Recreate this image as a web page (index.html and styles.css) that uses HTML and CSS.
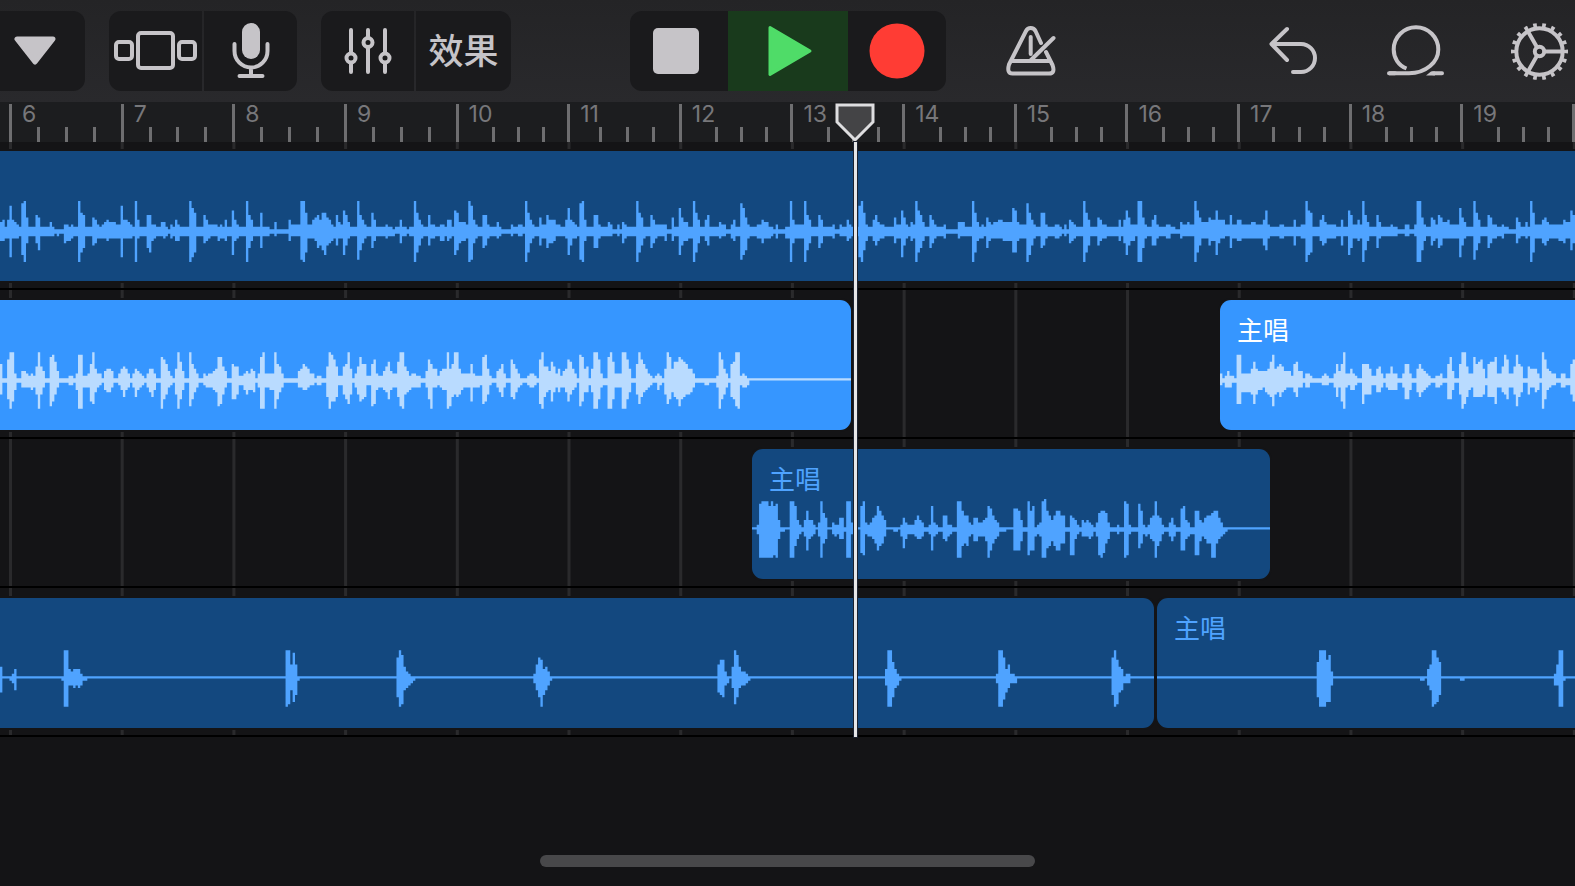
FILE: index.html
```html
<!DOCTYPE html>
<html lang="zh-CN">
<head>
<meta charset="utf-8">
<meta name="viewport" content="width=device-width, initial-scale=1">
<title>主唱</title>
<link rel="stylesheet" href="styles.css">
</head>
<body class="app">
<header class="toolbar">
  <div class="toolbar-left">
    <div class="group group-edge">
      <button class="tool tool-menu" type="button" aria-label="Menu">
        <svg width="42" height="30" viewBox="0 0 42 30"><path class="solid rounded" d="M3 3H39L21 26Z"/></svg>
      </button>
    </div>
    <div class="group">
      <button class="tool" type="button" aria-label="Browser">
        <svg class="line" width="84" height="40" viewBox="0 0 84 40"><rect x="2" y="11" width="16" height="17" rx="3"/><rect x="24" y="2" width="35" height="35" rx="3"/><rect x="65" y="11" width="16" height="17" rx="3"/></svg>
      </button>
      <button class="tool" type="button" aria-label="Microphone">
        <svg class="line" width="38" height="56" viewBox="0 0 38 56"><rect class="solid" x="10" y="0" width="18" height="36" rx="9"/><path d="M2.500 21V28A16.500 16.500 0 0 0 35.500 28V21M19 45V53M7.500 53H30.500"/></svg>
      </button>
    </div>
    <div class="group">
      <button class="tool" type="button" aria-label="Mixer">
        <svg class="line" width="48" height="46" viewBox="0 0 48 46"><path d="M7 2V25M7 35V44M24 2V9M24 19V44M41 2V25M41 35V44"/><circle cx="7" cy="30" r="4.500"/><circle cx="24" cy="14.500" r="4.500"/><circle cx="41" cy="30" r="4.500"/></svg>
      </button>
      <button class="tool tool-text" type="button">效果</button>
    </div>
  </div>
  <div class="group transport">
    <button class="tool tool-stop" type="button" aria-label="Stop">
      <svg width="46" height="46" viewBox="0 0 46 46"><rect class="solid" width="46" height="46" rx="5"/></svg>
    </button>
    <button class="tool tool-play" type="button" aria-label="Play">
      <svg width="46" height="52" viewBox="0 0 46 52"><path class="play" d="M3 2.500L43 26L3 49.500Z"/></svg>
    </button>
    <button class="tool" type="button" aria-label="Record">
      <svg width="56" height="56" viewBox="0 0 56 56"><circle class="record" cx="28" cy="28" r="27.500"/></svg>
    </button>
  </div>
  <div class="toolbar-right">
    <button class="plain" type="button" aria-label="Metronome">
      <svg class="line" width="50" height="50" viewBox="0 0 50 50"><path d="M35 17L29.500 5Q28 2 24.700 2Q21.500 2 20 5L3 38.500Q0.500 47.500 6.500 47.500H43Q49.500 47.500 46.500 39L40 26M6 35H44M24.700 11V28M25 34L47.500 12"/></svg>
    </button>
    <div class="edit-tools">
      <button class="plain" type="button" aria-label="Undo">
        <svg class="line" width="50" height="50" viewBox="0 0 50 50"><path d="M18 3L2.500 18L18 34M3 18H32A14 14 0 0 1 32 46H24"/></svg>
      </button>
      <button class="plain" type="button" aria-label="Loop browser">
        <svg class="line" width="60" height="52" viewBox="0 0 60 52"><path class="butt" d="M21.500 43.500C13.500 40.500 8.700 33 8.700 24.500A22.300 22.300 0 0 1 53.300 24.500C53.300 37 41 48.300 24 48.300H4"/><path d="M4 48.300H10M48 48.300H57"/><path class="solid bare" d="M41 50.500L46 46.500H50V50.500Z"/></svg>
      </button>
      <button class="plain" type="button" aria-label="Settings">
        <svg class="line" width="57" height="57" viewBox="0 0 57 57"><circle cx="28.500" cy="28.500" r="23.200"/><circle class="teeth" cx="28.500" cy="28.500" r="26.500" pathLength="180"/><circle cx="28.500" cy="28.500" r="4.700"/><path d="M33.500 28.500H51.500M26 24.200L17 8.600M26 32.800L17 48.400"/></svg>
      </button>
    </div>
  </div>
</header>

<main class="timeline">
  <div class="ruler" id="ruler"></div>
  <div class="tracks">
    <section class="track">
      <div class="clip open-left open-right" style="flex-grow:1575"><span class="clip-name"></span><svg class="wave" data-wave="drums" data-cols="666"></svg></div>
    </section>
    <section class="track">
      <div class="clip selected open-left" style="flex-grow:851"><span class="clip-name"></span><svg class="wave" data-wave="leadA" data-cols="360"></svg></div>
      <div class="space" style="flex-grow:369"></div>
      <div class="clip selected open-right" style="flex-grow:355"><span class="clip-name">主唱</span><svg class="wave" data-wave="leadB" data-cols="150"></svg></div>
    </section>
    <section class="track">
      <div class="space" style="flex-grow:752"></div>
      <div class="clip" style="flex-grow:518"><span class="clip-name">主唱</span><svg class="wave" data-wave="double" data-cols="220"></svg></div>
      <div class="space" style="flex-grow:305"></div>
    </section>
    <section class="track">
      <div class="clip open-left" style="flex-grow:1154"><span class="clip-name"></span><svg class="wave" data-wave="adlibA" data-cols="489"></svg></div>
      <div class="space" style="flex-grow:3"></div>
      <div class="clip open-right" style="flex-grow:418"><span class="clip-name">主唱</span><svg class="wave" data-wave="adlibB" data-cols="178"></svg></div>
    </section>
  </div>
  <div class="playhead">
    <svg class="playhead-grip" width="42" height="40" viewBox="0 0 42 40"><path d="M3 3H39V20L21 38L3 20Z"/></svg>
    <div class="playhead-line"></div>
  </div>
</main>
<div class="home-bar"></div>
<script src="timeline.js"></script>
</body>
</html>
```

FILE: styles.css
```css
* {
  box-sizing: border-box;
}

.app {
  margin: 0;
  min-height: 100vh;
  display: flex;
  flex-direction: column;
  overflow-x: hidden;
  background: #141416;
  font-family: Inter, "Noto Sans CJK SC", sans-serif;
}

svg {
  display: block;
}

button {
  margin: 0;
  padding: 0;
  border: 0;
  background: none;
  color: #c6c4c8;
  font-family: inherit;
}

/* Toolbar */

.toolbar {
  display: grid;
  grid-template-columns: 1fr auto 1fr;
  align-items: center;
  height: 102px;
  background: linear-gradient(#242426, #29292c);
}

.toolbar-left {
  display: flex;
  gap: 24px;
}

.group {
  display: flex;
  gap: 2px;
  height: 80px;
  border-radius: 12px;
  overflow: hidden;
}

.group-edge {
  border-radius: 0 12px 12px 0;
}

.tool {
  display: flex;
  align-items: center;
  justify-content: center;
  width: 93px;
  background: #1a1a1c;
}

.tool-menu {
  width: 85px;
  padding-right: 15px;
}

.tool-text {
  width: 95px;
  font-size: 35px;
  font-weight: 500;
  line-height: 40px;
}

.transport {
  gap: 0;
}

.transport .tool {
  width: 98px;
}

.transport .tool-stop {
  padding-right: 6px;
}

.transport .tool-play {
  width: 120px;
  padding-left: 4px;
  background: #193a1c;
}

.toolbar-right {
  display: flex;
  justify-content: space-between;
  padding: 0 7px 0 60px;
}

.edit-tools {
  display: flex;
  align-items: center;
  gap: 66px;
}

.line {
  fill: none;
  stroke: #c6c4c8;
  stroke-width: 4;
  stroke-linecap: round;
  stroke-linejoin: round;
}

.solid {
  fill: #c6c4c8;
}

.line .solid,
.bare {
  stroke: none;
}

.rounded {
  stroke: #c6c4c8;
  stroke-width: 5;
  stroke-linejoin: round;
}

.butt {
  stroke-linecap: butt;
}

.teeth {
  stroke-linecap: butt;
  stroke-dasharray: 4 6;
  stroke-dashoffset: 2;
}

.play {
  fill: #4fdc68;
  stroke: #4fdc68;
  stroke-width: 3;
  stroke-linejoin: round;
}

.record {
  fill: #ff3c34;
}

/* Ruler */

.timeline {
  position: relative;
}

.ruler {
  display: flex;
  height: 40px;
  padding: 2px 0 0 9px;
  background: #1c1d1f;
}

.bar {
  flex: 1 1 0;
  display: grid;
  grid-template-columns: repeat(4, 1fr);
  align-items: end;
}

.beat {
  height: 15px;
  border-left: 3px solid #6e6e70;
}

.beat-first,
.bar-end {
  height: 38px;
  border-left: 3px solid #6e6e70;
}

.bar-end {
  width: 2px;
}

.bar-number {
  display: block;
  padding-left: 10px;
  color: #77777a;
  font-size: 23px;
  line-height: 21px;
}

/* Tracks */

.tracks {
  background: linear-gradient(90deg, #2a2a2c 3px, transparent 3px) 9px 0 / calc((100% - 11px) / 14) 100% repeat-x;
}

.track {
  display: flex;
  padding: 10px 0 7px;
  border-bottom: 2px solid #000;
}

.track:first-child {
  padding-top: 9px;
}

.clip,
.space {
  flex-basis: 0;
  min-width: 0;
}

.clip {
  height: 130px;
  overflow: hidden;
  border-radius: 11px;
  background: #13487f;
  color: #4fa3ff;
  box-shadow: 0 0 0 2px #141416;
}

.clip.selected {
  background: #3696ff;
  color: #b9dbff;
}

.open-left {
  border-top-left-radius: 0;
  border-bottom-left-radius: 0;
}

.open-right {
  border-top-right-radius: 0;
  border-bottom-right-radius: 0;
}

.clip-name {
  display: block;
  height: 50px;
  padding: 17px 0 0 17px;
  font-size: 26px;
  line-height: 28px;
  white-space: nowrap;
}

.selected .clip-name {
  color: #fff;
}

.wave {
  width: 100%;
  height: 61px;
  fill: currentColor;
}

/* Playhead */

.playhead {
  position: absolute;
  top: 0;
  bottom: 0;
  left: 54.3%;
  width: 0;
  display: flex;
  flex-direction: column;
  align-items: center;
}

.playhead-grip {
  flex: none;
  fill: #444446;
  stroke: #dedee0;
  stroke-width: 3;
}

.playhead-line {
  flex: 1;
  width: 3px;
  background: #e6e6e8;
  box-shadow: 0 0 0 1px #1c2230;
}

.home-bar {
  width: 31.4%;
  height: 12px;
  margin: auto auto 19px;
  border-radius: 6px;
  background: #48484a;
}
```

FILE: timeline.js
```js
// Each run is "column,up,down": the level holds until the next run's column.
const waves = {
  drums: `0,4,4 1,5,4 2,2,3 3,5,3 4,11,11 5,5,3 6,4,3 7,3,3 8,2,2 9,12,10 10,13,13 11,6,5 12,2,2 15,7,5 16,6,8 17,2,2 21,4,2 22,2,2 23,1,1 24,1,2 25,1,1 27,3,5 28,3,4 29,2,4 30,3,3 31,2,2 33,13,13 34,8,9 35,7,7 36,2,2 39,6,6 40,5,5 41,3,3 42,2,3 43,3,3 44,4,3 45,5,4 46,4,3 49,3,3 51,11,11 52,5,3 54,4,3 55,3,3 56,2,2 57,13,13 58,5,3 59,2,2 62,7,7 63,7,9 64,3,4 65,3,3 66,2,2 68,4,2 69,4,3 70,2,2 71,1,1 72,3,3 73,2,2 74,5,4 75,3,4 76,2,2 80,13,13 81,10,11 82,8,9 83,2,2 86,7,5 87,5,4 88,3,3 89,3,2 92,2,4 93,3,3 94,2,3 95,5,4 96,2,2 98,9,10 99,5,4 100,3,3 101,2,2 104,13,13 105,7,7 106,5,4 107,2,2 110,8,7 111,2,2 114,1,1 116,4,2 117,1,1 122,5,4 123,3,2 127,13,12 128,13,13 129,8,9 130,3,3 132,5,3 133,6,4 134,7,7 135,5,6 136,8,8 137,8,10 138,6,6 139,5,5 140,3,4 141,2,3 142,7,6 143,4,3 144,3,3 145,9,10 146,7,6 147,4,3 148,2,2 151,13,12 152,7,8 153,5,5 154,3,3 155,2,2 157,8,7 158,5,4 159,2,2 163,3,3 164,2,2 166,1,2 167,2,1 169,5,5 170,2,2 172,1,1 173,2,2 175,13,13 176,8,9 177,5,6 178,3,3 179,2,2 181,7,6 182,3,3 184,2,2 186,3,4 188,2,2 189,5,4 190,5,3 191,2,2 192,9,10 193,8,8 194,4,5 195,4,4 197,3,3 198,13,13 199,11,12 200,5,5 201,3,3 202,2,2 204,7,7 205,7,6 206,3,3 207,2,2 210,4,3 211,2,2 212,1,1 216,3,2 217,2,1 219,3,2 221,2,1
  222,13,13 223,8,9 224,5,5 225,3,3 226,2,2 228,6,6 229,3,3 231,7,7 232,5,5 234,5,4 235,3,2 237,2,2 239,5,3 240,10,10 241,5,6 242,4,3 243,3,3 244,2,2 245,12,12 246,13,13 247,5,4 248,2,2 251,7,7 253,3,3 254,2,2 257,4,2 258,3,2 259,1,1 261,3,2 262,1,1 263,4,5 264,3,3 265,2,2 269,13,13 270,8,9 271,6,6 272,2,3 273,2,2 275,7,7 276,5,5 277,3,3 278,3,2 281,3,4 282,1,1 284,6,4 285,2,2 287,10,10 288,6,6 289,4,4 291,2,3 293,13,13 294,8,9 295,5,5 296,2,2 298,5,4 299,7,6 300,2,2 304,4,3 305,3,2 307,1,1 309,3,3 310,5,4 311,2,2 313,12,12 314,10,10 315,6,8 316,3,3 317,2,2 320,3,3 322,5,5 323,4,3 325,2,3 326,2,2 327,1,1 328,3,3 329,1,1 332,2,3 334,13,13 335,5,5 336,3,3 340,13,13 341,7,8 342,5,5 343,2,2 346,7,7 347,5,5 348,2,2 352,3,3 353,1,1 355,3,2 356,2,2 358,5,4 359,3,3 360,2,2 363,11,11 364,13,13 365,8,8 366,3,4 367,2,2 369,5,4 370,7,6 371,4,4 372,3,3 374,2,2 378,6,5 379,3,3 381,9,11 382,6,6 383,3,3 384,2,2 385,4,4 386,3,3 387,13,13 388,9,9 389,7,7 390,4,4 391,2,2 393,7,7 394,5,5 395,3,3 396,2,2 399,3,3 400,1,1 405,4,3 406,4,2 408,2,2 411,13,13 412,8,9 413,4,4 414,2,3 415,3,3 416,2,2 417,6,7 418,4,4 419,3,3 420,4,3 422,5,3 424,4,4 428,10,9 429,9,9 430,4,4 431,3,3 434,12,13 435,8,10 436,5,6 437,3,3 438,2,2 440,8,7 441,8,6 442,3,3 443,2,2
  446,3,3 448,2,2 449,1,1 450,3,2 451,1,1 452,5,5 453,4,4 454,3,3 455,2,2 458,13,13 459,8,9 460,5,6 461,2,2 464,6,6 465,5,4 466,3,3 468,2,2 473,5,4 474,2,2 475,5,5 476,9,10 477,6,6 478,3,4 480,3,2 481,13,13 483,6,7 484,3,3 485,2,2 487,5,6 488,7,6 489,3,3 490,2,2 493,3,3 495,2,1 497,1,1 499,4,3 500,3,2 502,4,2 503,3,2 505,13,13 506,9,9 507,6,6 508,4,3 511,6,6 512,5,4 514,9,10 515,5,5 516,5,3 518,3,2 520,7,7 521,3,3 523,5,4 525,3,3 529,4,3 531,3,3 534,5,6 535,9,8 536,3,3 537,2,2 541,3,3 543,2,2 547,5,6 548,2,2 550,3,3 552,13,13 553,9,10 554,8,9 555,2,2 558,5,4 559,7,6 560,4,5 561,3,3 565,2,2 567,5,6 568,2,2 570,9,10 571,7,7 572,3,3 574,5,4 575,3,3 576,13,13 577,7,8 578,4,4 579,2,2 582,7,7 583,4,3 584,2,2 588,3,2 589,2,2 591,1,1 594,3,2 596,1,1 598,3,2 599,13,13 601,6,8 602,3,4 603,2,2 605,6,6 606,5,4 607,3,3 608,7,7 609,6,6 610,4,3 612,5,3 613,3,3 617,10,11 618,6,6 619,4,3 620,2,2 623,13,12 624,8,8 625,5,5 626,2,2 629,7,7 630,6,5 631,3,3 633,2,2 635,3,3 636,2,1 638,1,1 641,6,5 642,4,3 643,2,2 645,4,3 646,2,2 647,13,13 648,8,9 649,3,3 652,5,5 653,6,6 654,4,4 655,3,3 659,3,4 661,5,5 662,4,3 664,9,8 665,7,5`,
  leadA: `0,7,6 1,1,1 3,9,8 4,12,12 5,12,9 6,3,4 7,1,1 9,4,3 11,3,3 12,2,3 13,3,4 14,2,3 15,6,6 16,12,12 17,6,6 18,4,3 19,1,1 21,10,11 22,11,9 23,8,6 24,4,3 25,1,1 29,2,2 31,1,1 32,3,4 33,11,12 35,2,3 37,3,3 38,7,9 39,12,10 40,5,5 41,3,3 42,3,2 43,1,1 44,4,4 45,5,5 47,4,3 48,1,1 50,3,2 51,5,4 52,6,7 53,5,4 54,3,3 55,1,1 56,3,3 57,5,7 58,4,4 59,3,3 60,2,2 61,1,1 62,3,3 63,5,5 64,5,7 65,3,4 66,1,1 68,10,12 69,9,8 70,7,6 71,4,3 72,2,2 73,1,1 74,5,6 75,12,12 76,8,8 77,4,4 78,1,1 80,12,11 81,7,8 82,5,5 83,3,3 84,1,1 86,3,2 87,2,3 88,3,3 90,4,4 91,5,5 92,10,11 93,10,10 94,6,6 95,4,3 96,1,1 98,7,8 99,6,8 100,6,6 101,2,2 103,3,4 104,4,6 105,3,4 106,5,4 107,4,5 108,1,1 109,3,3 110,10,12 111,12,12 112,3,3 114,3,4 116,12,12 117,7,8 118,6,5 119,3,3 120,1,1 126,4,3 127,5,3 128,7,4 129,6,4 130,5,3 131,3,2 133,1,1 134,2,2 136,1,1 138,6,7 139,12,12 140,11,9 141,9,9 142,6,7 143,2,2 145,6,6 146,7,8 147,12,10 148,5,6 149,1,1 150,3,3 151,6,6 152,10,9 153,7,8 154,7,7 155,2,2 157,7,11 158,9,10 159,3,4 160,2,3 162,4,4 163,6,5 164,8,8 165,4,4 166,3,3 168,8,7 169,12,11 170,12,12 171,6,6 172,4,5 173,2,4 174,3,3 176,2,3 178,1,1 180,4,3 181,9,8 182,7,12 183,5,3 185,2,2 186,4,3 187,5,4 189,12,12 190,5,11 191,7,7 192,12,6 193,12,7 194,5,6 195,3,4 196,3,3 199,7,9 200,3,3 201,2,3 203,2,2 204,10,10 205,11,9 206,5,6 207,2,2 208,1,1 210,4,3 211,5,5 212,7,7 213,3,3 214,1,1 216,9,7 217,7,8 218,5,5 219,3,3 220,1,2 221,1,1
  223,2,2 224,3,3 226,2,2 227,1,1 228,9,10 229,12,12 230,6,7 231,6,5 232,4,4 233,8,9 234,6,5 235,3,3 236,5,5 237,2,3 238,4,3 239,5,5 240,9,9 241,8,6 242,5,4 243,3,3 244,1,1 245,11,11 246,10,9 247,5,5 248,6,5 249,1,2 250,5,5 251,12,12 253,9,8 254,3,3 255,1,2 257,10,12 258,12,12 259,8,8 260,3,3 263,12,12 265,9,8 266,5,5 267,1,1 269,7,6 270,12,10 271,9,7 272,7,5 273,5,4 274,3,3 275,2,2 276,1,1 277,2,1 278,3,4 279,2,2 280,1,1 281,5,6 282,12,10 283,10,8 284,5,5 285,8,7 286,8,8 287,10,11 288,9,8 289,8,7 290,7,6 291,5,6 292,5,5 293,3,3 294,1,1 298,1,2 300,1,1 303,2,3 304,12,12 305,9,8 306,5,6 307,3,3 308,1,1 309,7,7 310,8,8 311,12,11 312,12,12 313,2,2 314,3,3 315,2,3 316,1,2 317,1,0`,
  leadB: `0,3,2 1,1,1 2,2,3 3,4,3 4,2,3 5,2,1 6,1,1 7,11,10 9,3,5 13,5,6 14,8,10 15,5,6 16,4,4 18,4,3 19,4,5 20,5,6 21,8,7 22,11,11 23,5,6 24,6,5 25,7,7 26,6,5 27,4,4 28,4,3 30,2,3 31,7,5 32,8,7 33,4,3 35,1,1 36,3,3 38,2,1 39,1,1 43,2,2 44,3,2 45,2,2 46,1,1 48,3,3 49,7,7 50,4,3 51,7,9 52,12,12 53,3,3 54,3,2 55,5,4 56,3,4 57,2,2 58,1,1 60,7,10 61,7,6 63,5,6 64,2,2 66,5,5 67,6,5 68,3,3 69,1,1 70,3,3 71,3,4 72,6,4 73,3,4 75,1,1 77,3,3 78,7,8 80,3,4 81,1,1 83,5,5 84,7,7 85,5,5 86,4,4 87,3,3 88,2,2 89,1,1 91,2,3 93,3,2 94,1,1 96,7,8 97,10,8 98,4,4 99,1,1 101,7,6 102,12,12 103,12,10 104,6,7 105,3,4 106,3,3 107,10,7 108,7,7 109,8,7 110,9,7 111,5,6 112,1,2 113,7,7 114,8,7 116,10,10 117,3,3 119,6,5 120,11,6 121,9,8 122,3,3 124,6,6 125,11,11 126,7,7 127,6,5 128,1,1 130,6,6 131,5,3 133,5,5 134,3,4 135,1,1 136,12,12 137,9,8 138,5,4 139,4,3 140,3,2 142,1,1 144,3,3 146,1,2 148,7,6 149,9,9`,
  double: `0,1,0 2,2,2 3,11,12 4,12,12 7,10,12 8,12,12 9,10,11 10,11,12 11,4,4 12,1,1 14,1,0 16,12,12 18,10,7 19,4,4 20,2,2 21,1,1 22,4,3 23,8,9 24,4,4 25,4,3 26,2,2 27,1,0 28,3,3 29,12,12 30,7,6 31,5,4 32,1,0 34,3,2 35,2,3 36,2,2 37,5,4 39,1,1 40,12,12 42,3,2 43,1,0 46,10,10 47,12,11 48,3,2 49,2,3 50,3,3 51,5,4 52,6,6 53,10,9 54,8,7 55,6,6 56,4,3 57,1,0 60,1,1 62,1,0 63,2,3 64,5,8 65,3,4 66,2,2 69,4,3 70,6,4 71,4,4 72,3,3 73,1,1 75,2,2 76,10,9 77,3,3 78,2,2 79,1,1 81,6,4 82,6,5 83,2,3 84,2,2 85,1,1 87,12,12 89,8,7 90,6,6 91,6,7 92,3,3 93,2,2 94,5,5 96,3,3 98,4,3 99,5,5 100,10,12 101,9,9 102,6,6 103,4,4 104,3,3 105,1,1 108,1,0 111,9,9 113,8,9 114,4,5 115,1,1 117,12,11 118,8,9 119,10,9 120,1,3 121,2,2 122,3,3 123,12,12 124,13,12 125,8,8 126,6,7 127,4,5 128,6,7 129,8,9 131,6,6 133,1,1 135,6,11 136,5,11 137,4,4 138,2,2 139,1,1 140,4,3 141,3,3 142,4,3 143,3,4 144,2,3 145,1,1 146,3,3 147,7,11 148,8,12 149,8,10 150,7,6 151,3,4 152,1,1 155,2,2 156,1,1 158,12,12 159,11,11 160,2,2 161,1,1 164,11,8 165,8,6 166,2,2 167,1,3 168,2,2 169,5,4 170,6,5 171,12,12 172,6,7 173,5,5 174,2,2 175,1,1 177,3,3 178,5,5 179,2,3 180,1,1 182,9,9 183,10,9 184,4,4 185,3,3 186,1,2 188,8,11 190,4,5 191,3,3 192,5,4 193,6,6 195,7,12 196,8,12 197,8,6 198,5,4 199,3,3 200,1,2 201,1,1 202,1,0`,
  adlibA: `0,5,6 1,1,0 4,1,1 5,2,2 6,4,5 7,1,0 26,1,1 27,12,12 29,4,3 30,3,3 31,4,4 32,4,3 33,4,4 34,2,3 35,1,1 37,1,0 121,12,12 122,12,11 123,6,5 124,11,10 125,6,7 126,1,1 127,1,0 168,9,8 169,12,12 170,10,11 171,5,5 172,3,4 173,2,3 174,1,2 175,1,1 176,1,0 226,2,2 227,6,5 228,9,8 229,8,12 230,4,7 231,5,5 232,3,3 233,1,1 234,1,0 304,6,6 305,8,7 306,8,8 307,3,3 308,1,2 309,1,0 310,5,4 311,12,11 312,10,8 313,5,4 314,3,3 316,2,2 317,1,1 318,1,0 375,4,3 376,12,12 378,7,8 379,4,4 380,2,3 381,1,1 382,1,0 422,2,2 423,12,12 425,9,9 426,4,6 427,6,4 428,2,2 430,1,2 431,1,0 471,9,7 472,12,12 473,8,11 474,5,6 475,4,5 476,1,2 477,2,2 479,1,0`,
  adlibB: `0,1,0 68,7,8 69,12,12 72,8,10 73,10,10 74,3,3 75,1,0 112,1,1 114,1,0 115,4,3 116,6,5 117,12,12 118,12,11 119,9,10 120,7,7 121,1,0 129,1,1 131,1,0 169,2,3 170,6,3 171,12,12 173,1,1 174,1,0`
};

const HALF = 13;

function wavePath(text, cols) {
  const runs = text.trim().split(/\s+/).map(run => run.split(",").map(Number));
  let top = `M0 ${HALF}`;
  let bottom = "";
  runs.forEach(([x, up, down], i) => {
    const end = i + 1 < runs.length ? runs[i + 1][0] : cols;
    top += `L${x} ${HALF - up}H${end}`;
    bottom = `L${end} ${HALF + down}H${x}` + bottom;
  });
  return top + bottom + "Z";
}

document.querySelectorAll(".wave").forEach(svg => {
  const cols = Number(svg.dataset.cols);
  svg.setAttribute("viewBox", `0 0 ${cols} ${HALF * 2}`);
  svg.setAttribute("preserveAspectRatio", "none");
  const path = document.createElementNS("http://www.w3.org/2000/svg", "path");
  path.setAttribute("d", wavePath(waves[svg.dataset.wave], cols));
  svg.append(path);
});

const beats = '<div class="beat"></div>'.repeat(3);
let bars = "";
for (let n = 6; n <= 19; n++) {
  bars += `<div class="bar"><div class="beat-first"><span class="bar-number">${n}</span></div>${beats}</div>`;
}
document.getElementById("ruler").innerHTML = bars + '<div class="bar-end"></div>';
```
